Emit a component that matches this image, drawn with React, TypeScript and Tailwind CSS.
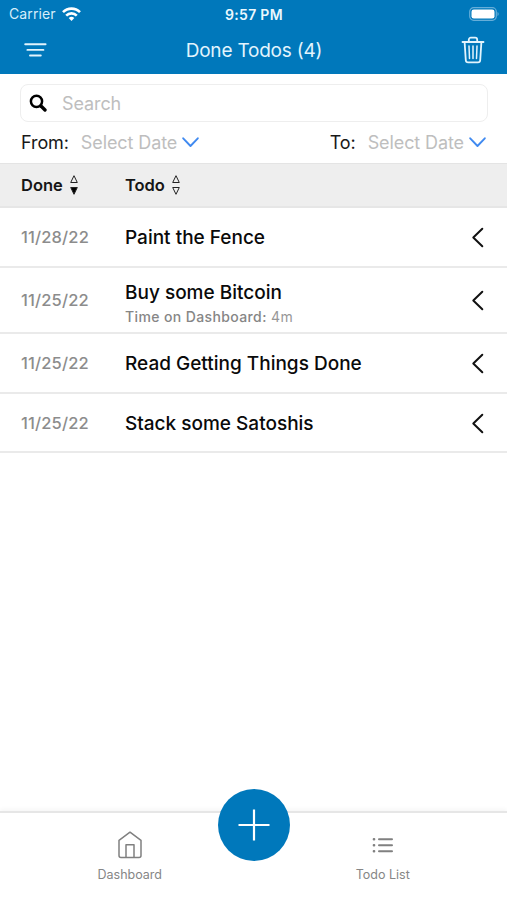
type Todo = {
  done: string;
  title: string;
  time?: string;
};

const todos: Todo[] = [
  { done: "11/28/22", title: "Paint the Fence" },
  { done: "11/25/22", title: "Buy some Bitcoin", time: "4m" },
  { done: "11/25/22", title: "Read Getting Things Done" },
  { done: "11/25/22", title: "Stack some Satoshis" },
];

function StatusBar() {
  return (
    <div className="grid h-[27px] grid-cols-3 items-center pr-[7px] pl-[9px]">
      <div className="flex items-center gap-[6px]">
        <span className="text-[14px] tracking-[0.1px] text-[#d6eefa]">Carrier</span>
        <svg width="19" height="14" viewBox="0 0 19 14" fill="none" stroke="#fff" strokeWidth="2.6">
          <path d="M1 5.2a12 12 0 0 1 17 0" />
          <path d="M4.2 8.6a7.5 7.5 0 0 1 10.6 0" />
          <path d="M9.5 13.9 6.7 11.1a4 4 0 0 1 5.6 0z" fill="#fff" stroke="none" />
        </svg>
      </div>
      <span className="pt-px pr-px text-center text-[14px] font-semibold tracking-[0.3px] whitespace-nowrap text-[#ecf8fe]">9:57 PM</span>
      <svg className="justify-self-end" width="31" height="14" viewBox="0 0 31 14">
        <rect x="0.7" y="0.7" width="26.6" height="12.6" rx="4" fill="none" stroke="#66aed9" strokeWidth="1.2" />
        <rect x="2.5" y="2.5" width="23" height="9" rx="2.3" fill="#fff" />
        <path d="M28.5 5v4c1.6-.6 1.6-3.4 0-4z" fill="#66aed9" />
      </svg>
    </div>
  );
}

function Header() {
  return (
    <header className="h-[74px] bg-[#0078bb] text-white">
      <StatusBar />
      <div className="flex h-[46px] items-center justify-between pr-[22px] pl-6">
        <svg width="23" height="16" viewBox="0 0 23 16" stroke="#e2f4fd" strokeWidth="1.9" strokeLinecap="round">
          <path d="M1.2 2.2h20.4M3.4 7.9h16M6 13.5h10.8" />
        </svg>
        <h1 className="pt-[2px] text-[19px] tracking-[-0.2px] text-[#e2f4fd]">Done Todos (4)</h1>
        <svg width="24" height="28" viewBox="0 0 24 28" fill="none" stroke="#e2f4fd" strokeWidth="1.8" strokeLinecap="round" strokeLinejoin="round">
          <path d="M1.5 6h21M3.6 6l1.2 18.2a2.3 2.3 0 0 0 2.3 2.2h9.8a2.3 2.3 0 0 0 2.3-2.2L20.4 6" />
          <path d="M7.8 6V3.7a2 2 0 0 1 2-2h4.4a2 2 0 0 1 2 2V6" />
          <path d="M8 10l.5 12.5M12 10v12.5M16 10l-.5 12.5" strokeWidth="1.5" />
        </svg>
      </div>
    </header>
  );
}

function DateSelect({ label }: { label: string }) {
  return (
    <div className="flex items-center">
      <span className="text-[18px] tracking-[-0.1px] text-[#181818]">{label}</span>
      <span className="ml-3 text-[18px] tracking-[-0.1px] text-[#bebebe]">Select Date</span>
      <svg className="ml-[5px]" width="17" height="11" viewBox="0 0 17 11" fill="none" stroke="#408af0" strokeWidth="1.9" strokeLinecap="round" strokeLinejoin="round">
        <path d="M1.2 1.3 8.5 9l7.3-7.7" />
      </svg>
    </div>
  );
}

function SortArrows({ active }: { active?: boolean }) {
  return (
    <svg width="10" height="22" viewBox="0 0 10 22" fill="none" stroke="#222" strokeWidth="1">
      <path d="M5 1.7 8.3 8.5H1.7z" />
      <path d="M5 20.3 8.3 13.5H1.7z" fill={active ? "#000" : "none"} />
    </svg>
  );
}

function TodoRow({ todo }: { todo: Todo }) {
  return (
    <li
      className={`flex items-center border-b-2 border-[#eaeaea] pt-[2px] pr-[23px] pl-[21px] ${todo.time ? "h-[66.5px]" : "h-[59.5px]"}`}
    >
      <span className="w-[104px] text-[16.5px] font-medium tracking-[0.15px] text-[#8c8c8c]">{todo.done}</span>
      <div className={`flex-1 ${todo.time ? "pt-[6px]" : "pt-px"}`}>
        <p className="text-[19px] leading-6 font-medium text-[#0a0a0a]">{todo.title}</p>
        {todo.time && (
          <p className="mt-[2px] text-[14px] leading-5 tracking-[0.38px] text-[#979797]">
            <span className="font-medium text-[#868686]">Time on Dashboard:</span> {todo.time}
          </p>
        )}
      </div>
      <svg width="13" height="21" viewBox="0 0 13 21" fill="none" stroke="#111" strokeWidth="2" strokeLinecap="round" strokeLinejoin="round">
        <path d="M11.3 1.8 2.3 10.5l9 8.7" />
      </svg>
    </li>
  );
}

function TabBar() {
  return (
    <nav className="relative grid h-[89px] grid-cols-2 border-t-2 border-[#e6e6e6] bg-white text-[12.5px] text-[#868686] shadow-[0_-2px_4px_rgba(0,0,0,0.04)]">
      <div className="flex flex-col items-center pt-[18px] pl-[6px]">
        <svg width="24" height="28" viewBox="0 0 24 28" fill="none" stroke="#808080" strokeWidth="1.5" strokeLinejoin="round">
          <path d="M12 1.2 1 9.3v15.2a2 2 0 0 0 2 2h18a2 2 0 0 0 2-2V9.3z" />
          <path d="M8 26.5V13.7h8v12.8" />
        </svg>
        <span className="mt-[7px]">Dashboard</span>
      </div>
      <div className="flex flex-col items-center pt-[18px] pl-[5px]">
        <svg width="22" height="28" viewBox="0 0 22 28" fill="none" stroke="#808080" strokeWidth="2" strokeLinecap="round">
          <path d="M7 8.2h13M7 14.2h13M7 20.3h13" />
          <path d="M1.9 8.2h.2M1.9 14.2h.2M1.9 20.3h.2" strokeWidth="2.5" />
        </svg>
        <span className="mt-[7px]">Todo List</span>
      </div>
      {/* Add button sits over the top edge of the bar */}
      <button
        aria-label="Add todo"
        className="absolute -top-[24.5px] left-[218px] flex size-[72px] items-center justify-center rounded-full bg-[#0078bb]"
      >
        <svg width="32" height="32" viewBox="0 0 32 32" stroke="#fff" strokeWidth="2.2">
          <path d="M16 .5v31M.5 16h31" />
        </svg>
      </button>
    </nav>
  );
}

export default function App() {
  return (
    <div className="flex h-[900px] w-[507px] flex-col overflow-hidden bg-white font-['Inter',sans-serif]">
      <Header />
      <section className="h-[89px] pt-[10px] pr-[19px] pl-5">
        <div className="flex h-[38px] items-center rounded-lg border border-[#eee] pl-[8px]">
          <svg width="18" height="18" viewBox="0 0 18 18" fill="none" stroke="#000" strokeLinecap="round">
            <circle cx="7.5" cy="7.3" r="5.6" strokeWidth="2.5" />
            <path d="m12 12 4 4" strokeWidth="3.3" />
          </svg>
          <span className="ml-[15px] text-[18px] tracking-[-0.1px] text-[#bebebe]">Search</span>
        </div>
        <div className="flex h-10 items-center justify-between pr-[2px] pl-px">
          <DateSelect label="From:" />
          <DateSelect label="To:" />
        </div>
      </section>
      <div className="flex h-[45px] items-center border-t border-b-2 border-t-[#e4e4e4] border-b-[#e6e6e6] bg-[#eee] pl-[21px] text-[16.5px] font-semibold text-[#161616]">
        <div className="flex w-[104px] items-center gap-[6px]">
          Done
          <SortArrows active />
        </div>
        <div className="flex items-center gap-[6px] tracking-[-0.1px]">
          Todo
          <SortArrows />
        </div>
      </div>
      <ul className="flex-1">
        {todos.map((todo, i) => (
          <TodoRow key={i} todo={todo} />
        ))}
      </ul>
      <TabBar />
    </div>
  );
}
